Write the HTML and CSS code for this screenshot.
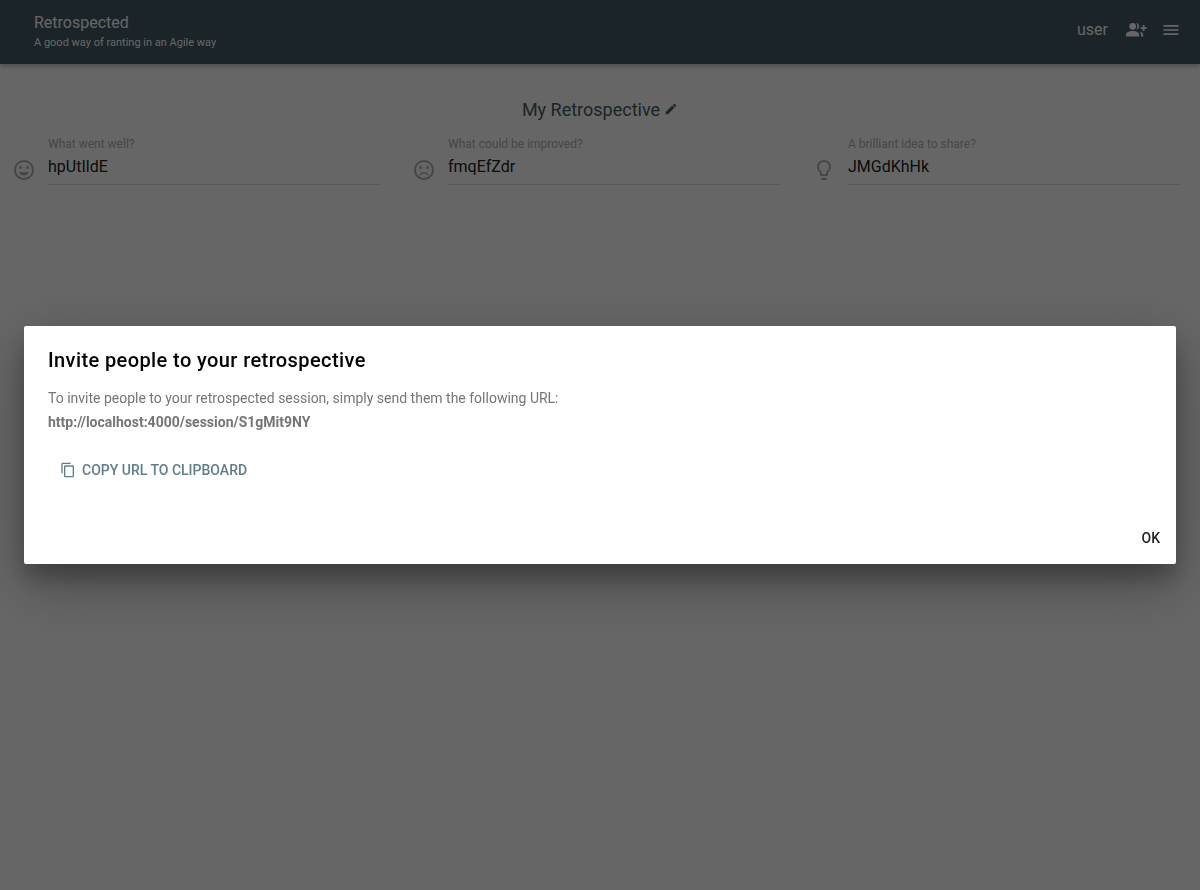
FILE: index.html
```html
<!DOCTYPE html>
<html lang="en">
<head>
<meta charset="utf-8">
<meta name="viewport" content="width=device-width, initial-scale=1">
<title>Retrospected</title>
<link rel="stylesheet" href="styles.css">
</head>
<body>
<header class="app-bar">
  <div class="brand">
    <div class="brand-name">Retrospected</div>
    <div class="brand-tagline">A good way of ranting in an Agile way</div>
  </div>
  <nav class="bar-actions">
    <span class="user-name">user</span>
    <button class="icon-button" type="button" aria-label="Invite">
      <svg class="icon-invite" viewBox="0 0 22 16" aria-hidden="true"><circle cx="6.700" cy="4.300" r="3.400"/><path d="M0 14.500v-1.800C0 10.300 3.500 9 6.700 9s6.500 1.300 6.500 3.700v1.800zM10.300 1c3.800.2 3.800 6.400 0 6.600 1.500-2 1.500-4.600 0-6.600zM13.800 9.600c2.200.6 3.400 1.700 3.400 3.200v1.700h-2.200v-1.800c0-1.200-.4-2.200-1.200-3.100zM16.700 3h1.800v2.200h2.200v1.700h-2.200v2.200h-1.800V6.900h-2.200V5.200h2.200z"/></svg>
    </button>
    <button class="icon-button" type="button" aria-label="Menu">
      <svg class="icon-menu" viewBox="0 0 24 24" aria-hidden="true"><path d="M3 18h18v-2H3v2zm0-5h18v-2H3v2zm0-7v2h18V6H3z"/></svg>
    </button>
  </nav>
</header>

<main class="board">
  <h1 class="board-title">My Retrospective
    <svg class="icon-edit" viewBox="0 0 24 24" aria-hidden="true"><path d="M3 17.250V21h3.750L17.810 9.940l-3.750-3.750L3 17.250zM20.710 7.040c.39-.39.39-1.020 0-1.410l-2.340-2.340c-.39-.39-1.020-.39-1.410 0l-1.830 1.830 3.750 3.750 1.830-1.830z"/></svg>
  </h1>
  <div class="columns">
    <div class="column">
      <svg class="column-icon" viewBox="0 0 24 24" aria-hidden="true"><path d="M11.990 2C6.470 2 2 6.480 2 12s4.470 10 9.990 10C17.520 22 22 17.520 22 12S17.520 2 11.990 2zM12 20c-4.420 0-8-3.580-8-8s3.580-8 8-8 8 3.580 8 8-3.580 8-8 8zm3.500-9c.83 0 1.500-.67 1.500-1.500S16.330 8 15.500 8 14 8.670 14 9.500s.67 1.500 1.500 1.500zm-7 0c.83 0 1.500-.67 1.500-1.500S9.330 8 8.500 8 7 8.670 7 9.500 7.670 11 8.500 11zm3.500 6.500c2.330 0 4.310-1.460 5.110-3.500H6.890c.8 2.040 2.780 3.500 5.110 3.500z"/></svg>
      <div class="field">
        <label class="field-label" for="well">What went well?</label>
        <input class="field-input" id="well" type="text" value="hpUtIldE">
      </div>
    </div>
    <div class="column">
      <svg class="column-icon" viewBox="0 0 24 24" aria-hidden="true"><circle cx="15.500" cy="9.500" r="1.500"/><circle cx="8.500" cy="9.500" r="1.500"/><path d="M12 14c-2.330 0-4.320 1.450-5.120 3.500h1.670c.69-1.190 1.970-2 3.450-2s2.750.81 3.450 2h1.670c-.8-2.050-2.790-3.500-5.120-3.500zM11.990 2C6.470 2 2 6.480 2 12s4.470 10 9.990 10C17.520 22 22 17.520 22 12S17.520 2 11.990 2zM12 20c-4.420 0-8-3.580-8-8s3.580-8 8-8 8 3.580 8 8-3.580 8-8 8z"/></svg>
      <div class="field">
        <label class="field-label" for="improve">What could be improved?</label>
        <input class="field-input" id="improve" type="text" value="fmqEfZdr">
      </div>
    </div>
    <div class="column">
      <svg class="column-icon" viewBox="0 0 24 24" aria-hidden="true"><path d="M9 21c0 .55.45 1 1 1h4c.55 0 1-.45 1-1v-1H9v1zm3-19C8.140 2 5 5.140 5 9c0 2.380 1.190 4.470 3 5.740V17c0 .55.45 1 1 1h6c.55 0 1-.45 1-1v-2.260c1.810-1.270 3-3.360 3-5.740 0-3.860-3.140-7-7-7zm2.850 11.100l-.85.6V16h-4v-2.300l-.85-.6C7.800 12.160 7 10.630 7 9c0-2.760 2.240-5 5-5s5 2.240 5 5c0 1.630-.8 3.160-2.150 4.100z"/></svg>
      <div class="field">
        <label class="field-label" for="idea">A brilliant idea to share?</label>
        <input class="field-input" id="idea" type="text" value="JMGdKhHk">
      </div>
    </div>
  </div>
</main>

<div class="overlay">
  <section class="dialog" role="dialog" aria-modal="true" aria-labelledby="invite-title">
    <div class="dialog-body">
      <h2 class="dialog-title" id="invite-title">Invite people to your retrospective</h2>
      <p class="dialog-text">To invite people to your retrospected session, simply send them the following URL:<br><strong>http://localhost:4000/session/S1gMit9NY</strong></p>
      <button class="button button-primary" type="button">
        <svg class="icon-copy" viewBox="0 0 24 24" aria-hidden="true"><path d="M16 1H4c-1.100 0-2 .9-2 2v14h2V3h12V1zm3 4H8c-1.100 0-2 .9-2 2v14c0 1.100.9 2 2 2h11c1.100 0 2-.9 2-2V7c0-1.100-.9-2-2-2zm0 16H8V7h11v14z"/></svg>
        Copy URL to Clipboard
      </button>
    </div>
    <div class="dialog-actions">
      <button class="button" type="button">OK</button>
    </div>
  </section>
</div>
</body>
</html>
```

FILE: styles.css
```css
* {
  box-sizing: border-box;
}

body {
  margin: 0;
  min-height: 100vh;
  background: #fff;
  color: #212121;
  font-family: Roboto, sans-serif;
}

svg {
  display: block;
  flex: none;
  fill: currentColor;
}

button {
  border: 0;
  background: none;
  color: inherit;
  font-family: inherit;
  cursor: pointer;
}

.app-bar {
  display: flex;
  align-items: center;
  justify-content: space-between;
  height: 64px;
  padding: 0 19px 0 34px;
  background: #455a64;
  color: #fff;
  box-shadow: 0 2px 5px rgba(0, 0, 0, .26);
}

.brand-name {
  font-size: 16px;
  line-height: 22px;
}

.brand-tagline {
  font-size: 11px;
  line-height: 18px;
}

.bar-actions {
  display: flex;
  align-items: center;
  padding-bottom: 4px;
}

.user-name {
  margin-right: 18px;
  font-size: 16px;
  line-height: 20px;
}

.icon-button {
  padding: 0;
}

.icon-button + .icon-button {
  margin-left: 13px;
}

.icon-invite {
  width: 22px;
  height: 16px;
}

.icon-menu {
  width: 20px;
  height: 20px;
}

.board-title {
  display: flex;
  align-items: center;
  justify-content: center;
  gap: 4px;
  margin: 34px 0 0;
  color: #455a64;
  font-size: 18px;
  font-weight: 400;
  line-height: 24px;
}

.icon-edit {
  width: 14px;
  height: 14px;
  margin-bottom: 2px;
}

.columns {
  display: grid;
  grid-template-columns: repeat(3, 1fr);
  margin-top: 14px;
}

.column {
  display: flex;
  padding: 0 20px 0 12px;
}

.column-icon {
  width: 24px;
  height: 24px;
  margin: 22px 12px 0 0;
  color: #b2b2b2;
}

.field {
  display: flex;
  flex: 1;
  flex-direction: column;
  min-width: 0;
}

.field-label {
  color: #b2b2b2;
  font-size: 12px;
  line-height: 16px;
}

.field-input {
  width: 100%;
  height: 33px;
  padding: 0 0 4px;
  border: 0;
  border-bottom: 1px solid #dedede;
  outline: 0;
  background: none;
  color: #212121;
  font-family: inherit;
  font-size: 16px;
}

.overlay {
  position: fixed;
  inset: 0;
  display: flex;
  align-items: center;
  justify-content: center;
  padding: 24px;
  background: rgba(0, 0, 0, .6);
}

.dialog {
  width: 100%;
  border-radius: 2px;
  background: #fff;
  box-shadow: 0 19px 60px rgba(0, 0, 0, .3), 0 15px 20px rgba(0, 0, 0, .22);
}

.dialog-body {
  padding: 24px 24px 0;
}

.dialog-title {
  margin: 0 0 16px;
  color: #000;
  font-size: 20px;
  font-weight: 500;
  letter-spacing: .02em;
  line-height: 20px;
}

.dialog-text {
  margin: 0 0 18px;
  color: #757575;
  font-size: 14px;
  line-height: 24px;
}

.button {
  display: inline-flex;
  align-items: center;
  height: 36px;
  padding: 0 12px;
  color: #212121;
  font-size: 14px;
  font-weight: 500;
  text-transform: uppercase;
}

.button-primary {
  color: #607d8b;
}

.icon-copy {
  width: 16px;
  height: 16px;
  margin-right: 6px;
}

.dialog-actions {
  display: flex;
  justify-content: flex-end;
  padding: 32px 4px 8px;
}
```
